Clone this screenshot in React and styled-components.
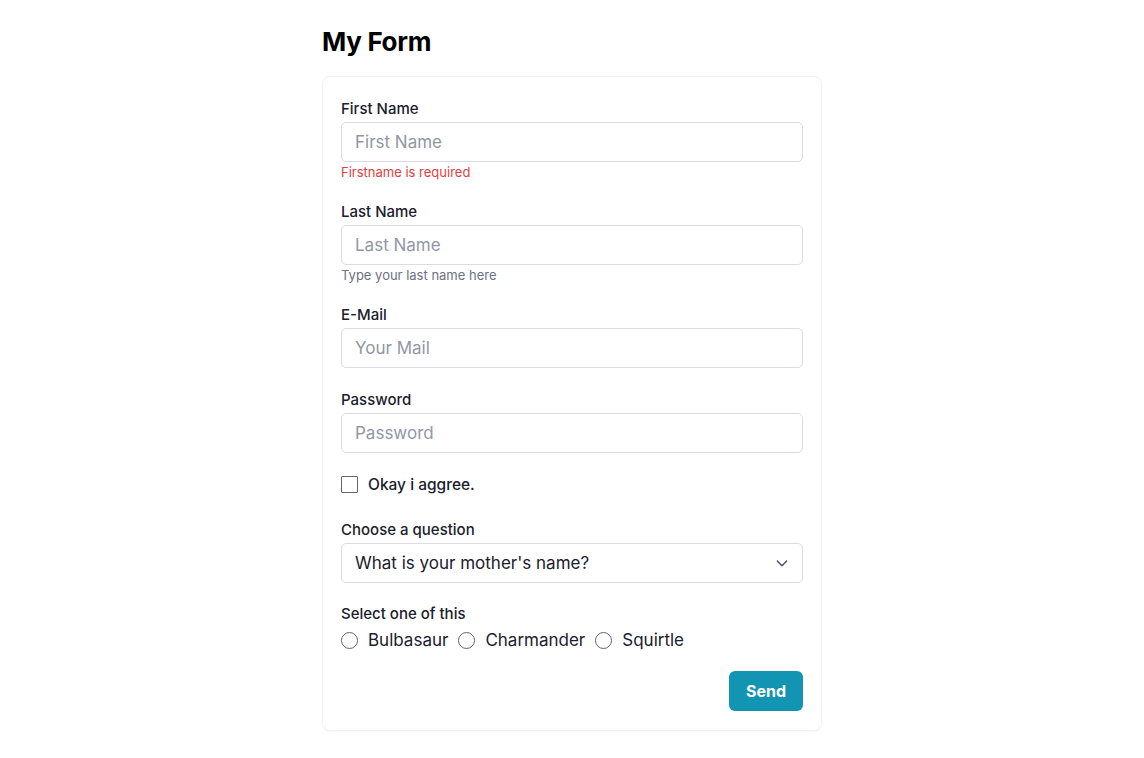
import React from "react";
import styled, { createGlobalStyle } from "styled-components";

const GlobalStyle = createGlobalStyle`
  * { box-sizing: border-box; }
  html, body { margin: 0; padding: 0; background: #ffffff; }
  body {
    font-family: Inter, "Noto Sans", "Liberation Sans", sans-serif;
    color: #1a202c;
    -webkit-font-smoothing: antialiased;
  }
`;

const Page = styled.main`
  width: 500px;
  margin: 0 auto;
  padding-top: 24px;
  padding-bottom: 20px;
`;

const Title = styled.h1`
  margin: 0 0 16px 0;
  font-size: 26px;
  line-height: 36px;
  font-weight: 700;
  color: #000000;
  letter-spacing: -0.3px;
`;

const Card = styled.form`
  display: flex;
  flex-direction: column;
  padding: 22px 18px 19px 18px;
  border: 1px solid #f0f1f3;
  border-radius: 8px;
  box-shadow: 0 1px 2px rgba(0, 0, 0, 0.03);
  background: #ffffff;
`;

const Field = styled.div`
  display: flex;
  flex-direction: column;
  margin-bottom: ${(p) => p.$gap ?? 22}px;
`;

const Label = styled.label`
  font-size: 15px;
  line-height: 20px;
  font-weight: 500;
  color: #1a202c;
  margin-bottom: 3px;
`;

const Input = styled.input`
  width: 100%;
  height: 40px;
  padding: 0 13px;
  border: 1px solid #d9dde2;
  border-radius: 5px;
  font-family: inherit;
  font-size: 17px;
  color: #1a202c;
  background: #ffffff;
  outline: none;

  &::placeholder {
    color: #8f98a3;
  }
`;

const Note = styled.div`
  margin-top: 2px;
  font-size: 13px;
  line-height: 16px;
  color: ${(p) => (p.$error ? "#e53e3e" : "#6b7280")};
`;

const CheckRow = styled.label`
  display: flex;
  align-items: center;
  gap: 10px;
  height: 24px;
  margin-bottom: 24px;
  font-size: 15.5px;
  font-weight: 500;
  color: #1a202c;
`;

const Box = styled.span`
  width: 17px;
  height: 17px;
  border: 1.5px solid #5f6670;
  border-radius: 1px;
  background: #ffffff;
  flex-shrink: 0;
`;

const SelectWrap = styled.div`
  position: relative;
  width: 100%;
  height: 40px;
`;

const Select = styled.select`
  appearance: none;
  -webkit-appearance: none;
  width: 100%;
  height: 40px;
  padding: 0 40px 0 13px;
  border: 1px solid #d9dde2;
  border-radius: 5px;
  font-family: inherit;
  font-size: 17px;
  color: #1a202c;
  background: #ffffff;
  outline: none;
`;

const Chevron = styled.svg`
  position: absolute;
  right: 13px;
  top: 50%;
  transform: translateY(-50%);
  pointer-events: none;
`;

const RadioRow = styled.div`
  display: flex;
  align-items: center;
  gap: 10px;
`;

const RadioItem = styled.label`
  display: flex;
  align-items: center;
  gap: 10px;
  font-size: 17px;
  line-height: 26px;
  color: #1a202c;
`;

const Circle = styled.span`
  width: 17px;
  height: 17px;
  border: 1.5px solid #5f6670;
  border-radius: 50%;
  flex-shrink: 0;
`;

const Actions = styled.div`
  display: flex;
  justify-content: flex-end;
  margin-top: 18px;
`;

const Button = styled.button`
  height: 40px;
  padding: 0 17px;
  border: none;
  border-radius: 6px;
  background: #1295b3;
  color: #ffffff;
  font-family: inherit;
  font-size: 16px;
  font-weight: 700;
  cursor: pointer;
`;

export default function App() {
  return (
    <>
      <GlobalStyle />
      <Page>
        <Title>My Form</Title>
        <Card onSubmit={(e) => e.preventDefault()}>
          <Field>
            <Label htmlFor="first">First Name</Label>
            <Input id="first" placeholder="First Name" />
            <Note $error>Firstname is required</Note>
          </Field>
          <Field>
            <Label htmlFor="last">Last Name</Label>
            <Input id="last" placeholder="Last Name" />
            <Note>Type your last name here</Note>
          </Field>
          <Field $gap={22}>
            <Label htmlFor="mail">E-Mail</Label>
            <Input id="mail" placeholder="Your Mail" />
          </Field>
          <Field $gap={19}>
            <Label htmlFor="pw">Password</Label>
            <Input id="pw" type="password" placeholder="Password" />
          </Field>
          <CheckRow>
            <Box />
            Okay i aggree.
          </CheckRow>
          <Field $gap={21}>
            <Label htmlFor="q">Choose a question</Label>
            <SelectWrap>
              <Select id="q" defaultValue="mother">
                <option value="mother">What is your mother's name?</option>
              </Select>
              <Chevron width="16" height="16" viewBox="0 0 24 24" fill="none">
                <path
                  d="M5 9l7 7 7-7"
                  stroke="#4a5568"
                  strokeWidth="2.2"
                  strokeLinecap="round"
                  strokeLinejoin="round"
                />
              </Chevron>
            </SelectWrap>
          </Field>
          <Field $gap={0}>
            <Label as="div">Select one of this</Label>
            <RadioRow>
              <RadioItem>
                <Circle />
                Bulbasaur
              </RadioItem>
              <RadioItem>
                <Circle />
                Charmander
              </RadioItem>
              <RadioItem>
                <Circle />
                Squirtle
              </RadioItem>
            </RadioRow>
          </Field>
          <Actions>
            <Button type="submit">Send</Button>
          </Actions>
        </Card>
      </Page>
    </>
  );
}
